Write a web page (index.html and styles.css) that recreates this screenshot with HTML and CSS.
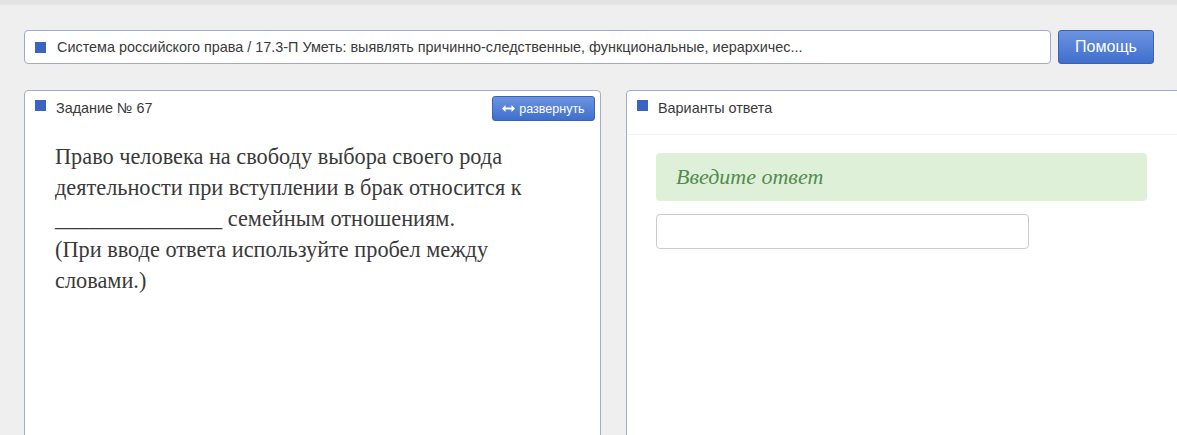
FILE: index.html
```html
<!DOCTYPE html>
<html>
  <head>
    <meta charset="utf-8" />
    <title>Задание № 67</title>
    <meta name="viewport" content="width=device-width, initial-scale=1" />
    <link rel="stylesheet" href="styles.css">
  </head>

  <body>
    <div class="topstrip"></div>

    <div class="toprow">
      <div class="crumb">
        <span class="mark"></span>
        <span>Система российского права / 17.3-П Уметь: выявлять причинно-следственные, функциональные, иерархичес...</span>
      </div>
      <button class="btn help">Помощь</button>
    </div>

    <div class="panels">
      <div class="panel task">
        <div class="panel-head">
          <span class="mark"></span>
          <span class="title">Задание № 67</span>
          <button class="btn expand">
            <svg width="13" height="7" viewBox="0 0 13 7">
              <path d="M0 3.5 L3.5 0 V2.5 H9.5 V0 L13 3.5 L9.5 7 V4.5 H3.5 V7 Z" fill="white" />
            </svg>
            развернуть
          </button>
        </div>
        <div class="question">
          Право человека на свободу выбора своего рода деятельности при вступлении в брак относится к
          _______________ семейным отношениям.<br />
          (При вводе ответа используйте пробел между словами.)
        </div>
      </div>

      <div class="panel answers">
        <div class="panel-head">
          <span class="mark"></span>
          <span class="title">Варианты ответа</span>
        </div>
        <div class="answer-body">
          <div class="hint">Введите ответ</div>
          <input class="answer-input" type="text" />
        </div>
      </div>
    </div>
  </body>
</html>
```

FILE: styles.css
```css
body {
  margin: 0;
  background: #efefef;
  font-family: "Liberation Sans", Arial, sans-serif;
  color: #3a3a3a;
  overflow: hidden;
  height: 435px;
}

.topstrip {
  height: 5px;
  background: #e3e3e3;
}

.toprow {
  display: flex;
  align-items: flex-start;
  gap: 7px;
  padding: 25px 23px 0 24px;
}

.crumb {
  flex: 1;
  height: 32px;
  display: flex;
  align-items: center;
  gap: 11px;
  padding: 0 10px;
  background: white;
  border: 1px solid #a2a8cf;
  border-radius: 4px;
  font-size: 14.4px;
  white-space: nowrap;
  overflow: hidden;
}

.mark {
  display: inline-block;
  width: 11px;
  height: 11px;
  flex: none;
  background: #3a64c2;
}

.btn {
  border: 1px solid #3a63b8;
  border-radius: 3px;
  background: linear-gradient(#6c93e0, #3f6fcd);
  color: white;
  font-family: "Liberation Sans", Arial, sans-serif;
  cursor: pointer;
}

.help {
  width: 96px;
  height: 34px;
  font-size: 16px;
}

.panels {
  display: flex;
  gap: 25px;
  margin-top: 26px;
  padding-left: 24px;
}

.panel {
  background: white;
  border: 1px solid #a4abd2;
  border-radius: 4px 4px 0 0;
  height: 360px;
  flex: none;
}

.task {
  width: 575px;
}

.answers {
  width: 580px;
}

.panel-head {
  height: 44px;
  box-sizing: border-box;
  display: flex;
  align-items: flex-start;
  gap: 10px;
  padding: 5px 5px 0 10px;
  font-size: 14.4px;
  line-height: 20px;
}

.panel-head .mark {
  margin-top: 4px;
}

.panel-head .title {
  flex: 1;
  margin-top: 2px;
}

.expand {
  height: 25px;
  width: 103px;
  font-size: 12.5px;
  padding: 0 4px;
  display: flex;
  align-items: center;
  justify-content: center;
  gap: 4px;
}

.question {
  padding: 6px 30px 0 30px;
  font-family: "Liberation Serif", "Times New Roman", serif;
  font-size: 22.3px;
  line-height: 31px;
  width: 480px;
}

.answers .panel-head {
  border-bottom: 1px solid #f2f2f2;
}

.answer-body {
  padding: 18px 29px 0 29px;
}

.hint {
  width: 451px;
  height: 48px;
  line-height: 48px;
  padding: 0 20px;
  background: #dff0d8;
  border-radius: 4px;
  font-family: "Liberation Serif", "Times New Roman", serif;
  font-style: italic;
  font-size: 22px;
  color: #528c50;
}

.answer-input {
  display: block;
  margin-top: 13px;
  width: 373px;
  height: 35px;
  box-sizing: border-box;
  border: 1px solid #ccc;
  border-radius: 4px;
}
```
